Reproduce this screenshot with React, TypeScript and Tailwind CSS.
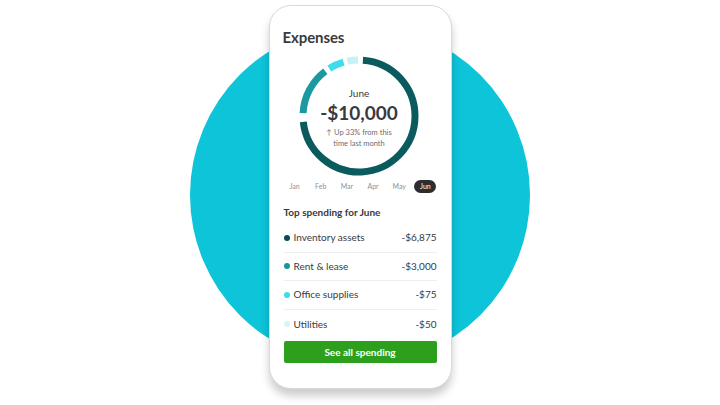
import React from "react";

const CX = 60;
const CY = 60;
const R = 56;

function pt(a: number) {
  const rad = (a * Math.PI) / 180;
  return [CX + R * Math.sin(rad), CY - R * Math.cos(rad)];
}

function arc(a0: number, a1: number) {
  const [x0, y0] = pt(a0);
  const [x1, y1] = pt(a1);
  const large = a1 - a0 > 180 ? 1 : 0;
  return `M ${x0.toFixed(2)} ${y0.toFixed(2)} A ${R} ${R} 0 ${large} 1 ${x1.toFixed(2)} ${y1.toFixed(2)}`;
}

const segments = [
  { a0: 4, a1: 264, c: "#0b5b5e" },
  { a0: 273, a1: 323, c: "#1a9aa0" },
  { a0: 328, a1: 344, c: "#3fdde9" },
  { a0: 348, a1: 359, c: "#c8f1f4" },
];

const rows = [
  { name: "Inventory assets", amt: "-$6,875", dot: "bg-[#0a4a52]" },
  { name: "Rent & lease", amt: "-$3,000", dot: "bg-[#17979b]" },
  { name: "Office supplies", amt: "-$75", dot: "bg-[#3ddde9]" },
  { name: "Utilities", amt: "-$50", dot: "bg-[#d6f5f7]" },
];

const months = ["Jan", "Feb", "Mar", "Apr", "May"];

export default function App() {
  return (
    <div
      className="relative w-[720px] h-[405px] overflow-hidden bg-white flex justify-center pt-[5px]"
      style={{ fontFamily: "Lato, 'Open Sans', sans-serif" }}
    >
      <div className="absolute left-[190px] top-[25px] w-[340px] h-[340px] rounded-full bg-[#0dc4d9]" />
      <div className="relative w-[183px] h-[384px] rounded-[22px] bg-white border border-[#d9d9d9] shadow-[0_7px_8px_rgba(0,0,0,0.2)] flex flex-col px-[14px] pt-[21px] text-[#393a3d]">
        <div className="text-[15px] leading-[20px] font-bold -ml-[1px] tracking-[-0.1px]">Expenses</div>
        <div className="relative self-center mt-[9px] w-[120px] h-[120px] -translate-x-[1px]">
          <svg width="120" height="120" viewBox="0 0 120 120" className="absolute inset-0">
            {segments.map((s, i) => (
              <path key={i} d={arc(s.a0, s.a1)} stroke={s.c} strokeWidth="7" fill="none" />
            ))}
          </svg>
          <div className="absolute inset-0 flex flex-col items-center pt-[30px]">
            <div className="text-[10px] leading-[14px]">June</div>
            <div className="text-[19px] leading-[22px] font-bold mt-[2px]">-$10,000</div>
            <div className="text-[7.5px] leading-[11px] text-[#6b6c72] mt-[3px] text-center">
              <span className="mr-[2px]">↑</span>Up 33% from this
              <br />
              time last month
            </div>
          </div>
        </div>
        <div className="flex items-center justify-between mt-[3px] h-[14px] text-[7px] text-[#8d9096]">
          {months.map((m) => (
            <span key={m} className="w-[22px] text-center">
              {m}
            </span>
          ))}
          <span className="w-[22px] h-[13px] rounded-full bg-[#2d2d2f] text-white flex items-center justify-center">
            Jun
          </span>
        </div>
        <div className="text-[10px] leading-[14px] font-bold mt-[12px]">Top spending for June</div>
        <div className="flex flex-col mt-[5px]">
          {rows.map((r, i) => (
            <div
              key={r.name}
              className={`flex items-center h-[28.6px] text-[10px] ${i < rows.length - 1 ? "border-b border-[#eceef0]" : ""}`}
            >
              <span className={`w-[6px] h-[6px] rounded-full ${r.dot} mr-[4px]`} />
              <span className="flex-1">{r.name}</span>
              <span>{r.amt}</span>
            </div>
          ))}
        </div>
        <div className="mt-[3px] h-[22px] rounded-[2px] bg-[#2ca01c] text-white text-[10px] font-bold flex items-center justify-center">
          See all spending
        </div>
      </div>
    </div>
  );
}
